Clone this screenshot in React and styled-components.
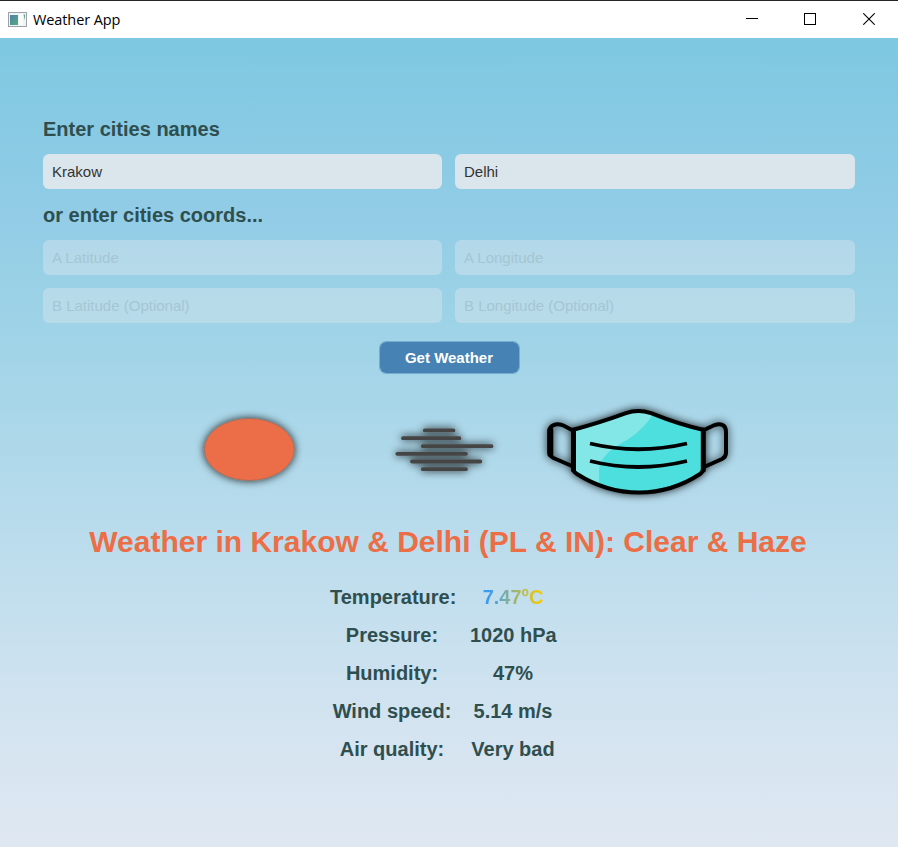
import React from "react";
import styled, { createGlobalStyle } from "styled-components";

const GlobalStyle = createGlobalStyle`
  * { box-sizing: border-box; }
  body { margin: 0; overflow: hidden; }
`;

const Window = styled.div`
  width: 898px;
  height: 847px;
  display: flex;
  flex-direction: column;
  font-family: "Liberation Sans", Arial, sans-serif;
`;

const TitleBar = styled.header`
  height: 38px;
  flex: none;
  display: flex;
  align-items: center;
  background: #fff;
  border-top: 1px solid #26262a;
  padding-left: 8px;
  padding-bottom: 1px;
`;

const WindowTitle = styled.span`
  flex: 1;
  margin-left: 6px;
  padding-top: 2px;
  font: 14.5px/20px "Open Sans", "Noto Sans", sans-serif;
  letter-spacing: -0.1px;
  color: #000;
`;

const Controls = styled.div`
  display: flex;
`;

const ControlButton = styled.button`
  width: ${(p) => p.$width}px;
  height: 36px;
  display: flex;
  align-items: center;
  justify-content: center;
  border: 0;
  padding: 0;
  background: none;
`;

const Content = styled.main`
  flex: 1;
  display: flex;
  flex-direction: column;
  padding: 78px 43px 0;
  background: linear-gradient(#7ec8e1 0%, #92cce6 22%, #9ad1e6 31%, #add8ea 50%, #d2e3f0 83%, #dfe8f2 100%);
`;

const SectionLabel = styled.h2`
  margin: 0;
  height: 26px;
  font-size: 20px;
  line-height: 26px;
  font-weight: bold;
  color: #2f4f4f;
`;

const FieldRow = styled.div`
  display: grid;
  grid-template-columns: 399px 400px;
  gap: 13px;
  margin: ${(p) => p.$margin};
`;

const Field = styled.input`
  width: 100%;
  height: 35px;
  border: 0;
  border-radius: 6px;
  padding: 0 9px;
  font: 15px "Liberation Sans", Arial, sans-serif;
  color: #333;
  background: #dae6ec;
  &:disabled {
    background: rgba(218, 230, 236, 0.44);
  }
  &::placeholder {
    color: #a5c6d3;
    opacity: 1;
  }
`;

const SubmitButton = styled.button`
  align-self: center;
  width: 141px;
  height: 33px;
  margin: 18px 0 0;
  padding: 0;
  border: 1px solid #74adcd;
  border-radius: 7px;
  background: #4682b4;
  background-clip: padding-box;
  color: #fff;
  font: bold 15px "Liberation Sans", Arial, sans-serif;
`;

const Icons = styled.div`
  display: flex;
  height: 150px;
  margin: 0 -43px;
  svg { display: block; overflow: visible; }
`;

const Headline = styled.h1`
  margin: -1px 0 0 -2px;
  height: 38px;
  text-align: center;
  white-space: nowrap;
  font-size: 30px;
  line-height: 38px;
  color: #eb6e46;
`;

const Details = styled.dl`
  display: grid;
  grid-template-columns: 126px 86px;
  column-gap: 14px;
  grid-auto-rows: 38px;
  margin: 17px 0 0 287px;
  font-size: 20px;
  line-height: 38px;
  font-weight: bold;
  text-align: center;
  white-space: nowrap;
  color: #2f4f4f;
`;

const DetailName = styled.dt`
  margin: 0 1px 0 -1px;
  &:first-child { margin: 0; }
`;

const DetailValue = styled.dd`
  margin: 0;
`;

const Temperature = styled.span`
  background: linear-gradient(90deg, #3c9cf0 12%, #8ab290 45%, #f5c800 95%);
  background-clip: text;
  -webkit-background-clip: text;
  color: transparent;
`;

function AppIcon() {
  return (
    <svg width="19" height="15" viewBox="0 0 19 15">
      <defs>
        <linearGradient id="app" x1="0" y1="0" x2="1" y2="1">
          <stop offset="0" stopColor="#4c80a8" />
          <stop offset="1" stopColor="#55ac7d" />
        </linearGradient>
      </defs>
      <rect x="0.5" y="0.5" width="18" height="14" fill="#f0f3f5" stroke="#9ba2a9" />
      <rect x="2" y="3" width="8" height="10" fill="url(#app)" />
      <rect x="11" y="2" width="4" height="11" fill="#fafafa" />
      <path d="M15.5 2.5h1.5v6z" fill="#55a284" />
    </svg>
  );
}

function SkyIcons() {
  return (
    <svg width="898" height="150" viewBox="0 374 898 150">
      <defs>
        <filter id="shadow" x="-30%" y="-30%" width="160%" height="160%">
          <feDropShadow dx="0" dy="0" stdDeviation="4" floodColor="#000" floodOpacity="0.85" />
        </filter>
        <filter id="haze-shadow" x="-30%" y="-50%" width="160%" height="200%">
          <feGaussianBlur in="SourceGraphic" stdDeviation="0.6" result="soft" />
          <feDropShadow in="soft" dx="0" dy="0" stdDeviation="4.5" floodColor="#000" floodOpacity="1" />
        </filter>
        <clipPath id="mask-shape">
          <path d="M575 430Q603 423 625 413Q638 408 651 413Q674 424 703 430V472Q674 492 639 492Q604 492 575 472Z" />
        </clipPath>
      </defs>
      <ellipse cx="249.3" cy="449.5" rx="45" ry="31" fill="#eb6e49" stroke="#8f6657" strokeWidth="0.6" filter="url(#shadow)" />
      <g stroke="#444" strokeWidth="3.8" strokeLinecap="round" filter="url(#haze-shadow)">
        <path d="M424.8 430.4H453.5M403 438.2H459.5M422.8 446.2H491.5M397.3 453.8H466M412 461.5H480.3M422.8 469.2H466" />
      </g>
      <g filter="url(#shadow)">
        <g clipPath="url(#mask-shape)">
          <path d="M570 400h140v100H570z" fill="#4ddede" />
          <path d="M570 400H660C653 417 644 429 627 440C608 450 599 459 599 472V500H570Z" fill="#84e7e7" />
        </g>
        <path
          d="M573.4 429.7C592 425 610 419 626 413.2Q638 409 651 413.2C668 420 685 426 703 429.7V469Q703 472 700 474Q672 492.5 639 492.5Q606 492.5 577 474Q573.4 472 573.4 469Z"
          fill="none"
          stroke="#000"
          strokeWidth="4"
          strokeLinejoin="round"
        />
        <path d="M573.5 430V470M703.3 430V470" stroke="#000" strokeWidth="5" strokeLinecap="round" />
        <path
          d="M572 430L563 425.3C556 423 549.5 425 549.5 431V452Q549.5 456 553.5 458L572 466M704 430L714 425.3C720 423 726 424 726 432V453Q726 457 722 459L704 467"
          fill="none"
          stroke="#000"
          strokeWidth="4"
        />
        <path d="M550.3 430V454" stroke="#000" strokeWidth="6" strokeLinecap="round" />
        <path d="M590 443.5Q638 455 687 443.5M590 461Q638 473 687 461" fill="none" stroke="#000" strokeWidth="3.8" />
      </g>
    </svg>
  );
}

const details = [
  ["Temperature:", <Temperature key="t">7.47ºC</Temperature>],
  ["Pressure:", "1020 hPa"],
  ["Humidity:", "47%"],
  ["Wind speed:", "5.14 m/s"],
  ["Air quality:", "Very bad"],
];

export default function App() {
  return (
    <Window>
      <GlobalStyle />
      <TitleBar>
        <AppIcon />
        <WindowTitle>Weather App</WindowTitle>
        <Controls>
          <ControlButton $width={58} aria-label="Minimize">
            <svg width="12" height="12"><path d="M0 5.5h12" stroke="#000" /></svg>
          </ControlButton>
          <ControlButton $width={58} aria-label="Maximize">
            <svg width="12" height="12"><rect x="0.5" y="0.5" width="11" height="11" fill="none" stroke="#000" /></svg>
          </ControlButton>
          <ControlButton $width={59} aria-label="Close">
            <svg width="12" height="12"><path d="M0.3 0.3L11.7 11.7M11.7 0.3L0.3 11.7" stroke="#000" strokeWidth="1.1" /></svg>
          </ControlButton>
        </Controls>
      </TitleBar>
      <Content>
        <SectionLabel>Enter cities names</SectionLabel>
        <FieldRow $margin="12px 0 13px">
          <Field defaultValue="Krakow" />
          <Field defaultValue="Delhi" />
        </FieldRow>
        <SectionLabel>or enter cities coords...</SectionLabel>
        <FieldRow $margin="12px 0 0">
          <Field disabled placeholder="A Latitude" />
          <Field disabled placeholder="A Longitude" />
          <Field disabled placeholder="B Latitude (Optional)" />
          <Field disabled placeholder="B Longitude (Optional)" />
        </FieldRow>
        <SubmitButton>Get Weather</SubmitButton>
        <Icons><SkyIcons /></Icons>
        <Headline>Weather in Krakow &amp; Delhi (PL &amp; IN): Clear &amp; Haze</Headline>
        <Details>
          {details.map(([name, value]) => (
            <React.Fragment key={name}>
              <DetailName>{name}</DetailName>
              <DetailValue>{value}</DetailValue>
            </React.Fragment>
          ))}
        </Details>
      </Content>
    </Window>
  );
}
